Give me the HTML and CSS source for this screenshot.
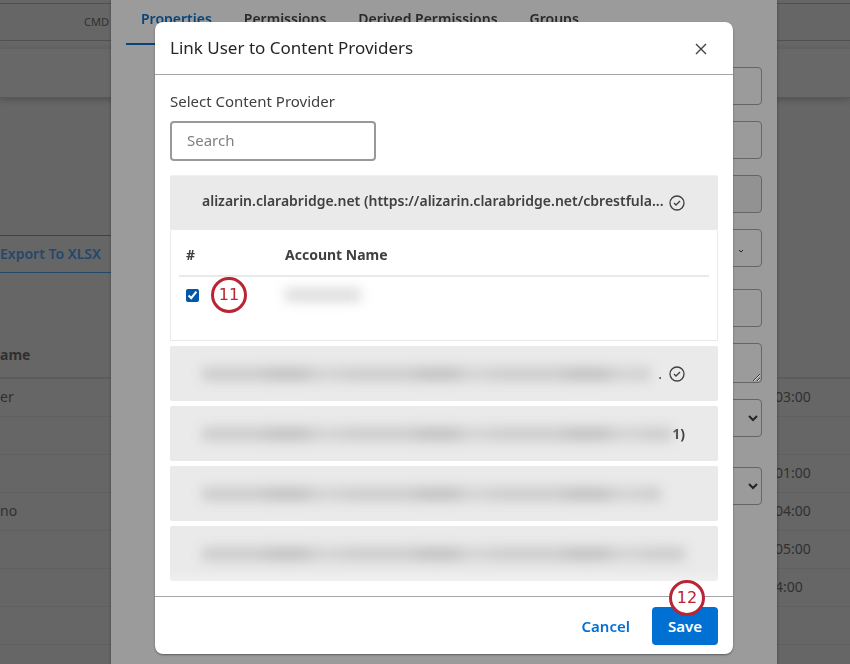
FILE: index.html
```html
<!DOCTYPE html>
<html lang="en">

<head>
    <meta charset="UTF-8">
    <meta name="viewport" content="width=device-width, initial-scale=1.0">
    <title>Link User to Content Providers</title>
    <link rel="stylesheet" href="styles.css">
</head>

<body>
    <!-- Page behind the overlays -->
    <div class="page">
        <div class="top-bar"><span class="top-label">CMD</span></div>
        <div class="sub-bar"></div>
        <div class="toolbar">
            <button class="export-button">Export To XLSX</button>
        </div>
        <table class="users">
            <thead>
                <tr><th>ame</th><th></th></tr>
            </thead>
            <tbody>
                <tr><td>er</td><td class="time">03:00</td></tr>
                <tr><td></td><td></td></tr>
                <tr><td></td><td class="time">01:00</td></tr>
                <tr><td>no</td><td class="time">04:00</td></tr>
                <tr><td></td><td class="time">05:00</td></tr>
                <tr><td></td><td class="time">4:00</td></tr>
                <tr><td></td><td></td></tr>
                <tr><td></td><td></td></tr>
            </tbody>
        </table>
    </div>

    <!-- User details panel -->
    <div class="layer panel-layer">
        <div class="panel">
            <nav class="tabs">
                <a href="#" class="tab active">Properties</a>
                <a href="#" class="tab">Permissions</a>
                <a href="#" class="tab">Derived Permissions</a>
                <a href="#" class="tab">Groups</a>
            </nav>
            <form class="fields">
                <input class="field" type="text" aria-label="First name">
                <input class="field" type="text" aria-label="Last name">
                <input class="field disabled" type="text" aria-label="Email" disabled>
                <button class="field field-menu" type="button" aria-label="Role">
                    <svg width="6" height="4" viewBox="0 0 6 4"><path d="M1 1l2 2 2-2" /></svg>
                </button>
                <input class="field spaced" type="text" aria-label="Phone">
                <textarea class="field area" aria-label="Notes"></textarea>
                <div class="select-wrap">
                    <select class="field" aria-label="Language"></select>
                    <svg width="10" height="7" viewBox="0 0 10 7"><path d="M1 1l4 4 4-4" /></svg>
                </div>
                <div class="select-wrap spaced-lg">
                    <select class="field" aria-label="Status"></select>
                    <svg width="10" height="7" viewBox="0 0 10 7"><path d="M1 1l4 4 4-4" /></svg>
                </div>
            </form>
        </div>
    </div>

    <!-- Dialog -->
    <div class="layer modal-layer">
        <div class="modal" role="dialog" aria-labelledby="modalTitle">
            <div class="modal-header">
                <h1 id="modalTitle">Link User to Content Providers</h1>
                <button class="close-button" aria-label="Close">
                    <svg width="12" height="12" viewBox="0 0 12 12"><path d="M1 1l10 10M11 1L1 11" /></svg>
                </button>
            </div>

            <div class="modal-body">
                <label class="search-label" for="search">Select Content Provider</label>
                <input class="search" id="search" type="text" placeholder="Search">

                <div class="providers">
                    <section class="provider">
                        <div class="provider-header open">
                            <span class="provider-name">alizarin.clarabridge.net (https://alizarin.clarabridge.net/cbrestfula...</span>
                            <svg class="check" width="16" height="16" viewBox="0 0 16 16"><circle cx="8" cy="8" r="7" /><path d="M5 8l2 2 4-4" /></svg>
                        </div>
                        <div class="provider-body">
                            <table class="accounts">
                                <thead>
                                    <tr><th class="col-select">#</th><th>Account Name</th></tr>
                                </thead>
                                <tbody>
                                    <tr>
                                        <td>
                                            <div class="select-cell">
                                                <input type="checkbox" aria-label="Select account" checked>
                                                <span class="step">11</span>
                                            </div>
                                        </td>
                                        <td><div class="masked masked-account"></div></td>
                                    </tr>
                                </tbody>
                            </table>
                        </div>
                    </section>

                    <section class="provider provider-header">
                        <div class="masked"></div>
                        <span class="dot">.</span>
                        <svg class="check" width="16" height="16" viewBox="0 0 16 16"><circle cx="8" cy="8" r="7" /><path d="M5 8l2 2 4-4" /></svg>
                    </section>
                    <section class="provider provider-header">
                        <div class="masked"></div>
                        <span class="name-end">1)</span>
                    </section>
                    <section class="provider provider-header short">
                        <div class="masked"></div>
                    </section>
                    <section class="provider provider-header last">
                        <div class="masked"></div>
                    </section>
                </div>
            </div>

            <div class="modal-footer">
                <button class="cancel-button">Cancel</button>
                <div class="save-wrap">
                    <button class="save-button">Save</button>
                    <span class="step save-step">12</span>
                </div>
            </div>
        </div>
    </div>
</body>

</html>
```
FILE: styles.css
```css
:root {
    --primary: #0070d2;
    --step: #b92534;
    --text: #404040;
    --page: #666666;
    --panel: #9b9b9b;
    --item: #eaeaea;
}

* {
    box-sizing: border-box;
}

body {
    margin: 0;
    height: 100vh;
    overflow: hidden;
    background: var(--page);
    color: var(--text);
    font-family: "Noto Sans", "Open Sans", sans-serif;
    font-size: 14px;
    line-height: 20px;
}

button,
input,
select,
textarea {
    font: inherit;
    color: inherit;
}

/* Page */
.page {
    color: #303030;
}

.top-bar {
    height: 38px;
    margin-top: 3px;
    padding: 8px 84px;
    border-top: 1px solid #505050;
    border-bottom: 1px solid #505050;
    font-size: 11px;
}

.sub-bar {
    height: 50px;
    margin-top: 7px;
    background: #686868;
    border-top: 1px solid #616161;
    border-bottom: 1px solid #575757;
    box-shadow: 0 2px 6px rgba(0, 0, 0, 0.2);
}

.toolbar {
    padding-top: 137px;
}

.export-button {
    display: block;
    height: 38px;
    padding: 0 22px 0 0;
    border: 1px solid #24486b;
    border-left: 0;
    background: none;
    color: #24486b;
    font-weight: 600;
}

.users {
    width: 100%;
    margin-top: 61px;
    border-collapse: collapse;
    table-layout: fixed;
}

.users th,
.users td {
    height: 38px;
    padding: 0 0 1px;
    border-bottom: 1px solid #606060;
    text-align: left;
}

.users th {
    height: 44px;
    border-bottom: 2px solid #5c5c5c;
}

.users th:last-child {
    width: 75px;
}

/* Overlays */
.layer {
    position: fixed;
    inset: 0;
}

.panel-layer {
    padding: 0 73px 0 111px;
}

.modal-layer {
    padding: 22px 117px 0 155px;
}

/* Panel */
.panel {
    height: 100%;
    padding: 0 15px;
    background: var(--panel);
    box-shadow: 0 0 3px rgba(0, 0, 0, 0.3);
}

.tabs {
    display: flex;
    gap: 2px;
}

.tab {
    padding: 9px 15px 14px;
    border-bottom: 2px solid transparent;
    color: #292929;
    font-weight: 600;
    text-decoration: none;
    white-space: nowrap;
}

.tab.active {
    border-color: #0a4478;
    color: #0a4478;
}

.fields {
    display: flex;
    flex-direction: column;
    gap: 16px;
    margin: 22px 0 0 160px;
}

.field {
    display: block;
    width: 100%;
    height: 38px;
    border: 1px solid #666666;
    border-radius: 4px;
    background: transparent;
    appearance: none;
}

.field.disabled {
    background: #929292;
}

.field-menu {
    padding: 0 17px;
    text-align: right;
}

.spaced {
    margin-top: 6px;
}

.spaced-lg {
    margin-top: 14px;
}

.area {
    height: 40px;
}

.select-wrap {
    display: flex;
    align-items: center;
}

.select-wrap svg {
    flex: none;
    margin-left: -14px;
}

.fields svg {
    fill: none;
    stroke: #252525;
    stroke-width: 2;
}

.fields .field-menu svg {
    stroke-width: 1;
}

/* Dialog */
.modal {
    border-radius: 8px;
    background: white;
    box-shadow: 0 1px 2px rgba(0, 0, 0, 0.4);
}

.modal-header {
    display: flex;
    align-items: center;
    justify-content: space-between;
    height: 53px;
    padding: 0 26px 0 15px;
    border-bottom: 1px solid #a6a6a6;
}

h1 {
    margin: 0;
    color: #262626;
    font-size: 17px;
    font-weight: 400;
}

.close-button {
    display: flex;
    padding: 2px 0 0;
    border: 0;
    background: none;
}

.close-button svg {
    fill: none;
    stroke: #404040;
    stroke-width: 1.4;
}

.modal-body {
    padding: 16px 15px 15px;
}

.search-label {
    display: block;
    font-size: 15px;
}

.search {
    display: block;
    width: 206px;
    height: 40px;
    margin-top: 10px;
    padding: 0 15px 2px;
    border: 2px solid #999999;
    border-radius: 4px;
    font-size: 15px;
}

.search::placeholder {
    color: #808080;
    opacity: 1;
}

.providers {
    display: flex;
    flex-direction: column;
    gap: 5px;
    margin-top: 15px;
}

.provider-header {
    display: flex;
    align-items: center;
    height: 55px;
    padding: 0 33px 0 32px;
    border-radius: 2px;
    background: var(--item);
    font-weight: 600;
}

.provider-header.open {
    height: 54px;
    box-shadow: 0 -1px 1px #f0f0f0;
}

.provider-name {
    flex: 1;
    padding-bottom: 4px;
    white-space: nowrap;
}

.name-end {
    font-weight: 700;
}

.check {
    flex: none;
    margin-left: 2px;
    fill: none;
    stroke: #404040;
    stroke-width: 1.3;
}

.provider-body {
    height: 111px;
    padding: 0 8px;
    border: 1px solid var(--item);
    border-top: 0;
}

.accounts {
    width: 100%;
    border-collapse: collapse;
}

.accounts th {
    height: 46px;
    padding: 5px 0 0;
    border-bottom: 2px solid var(--item);
    font-weight: 700;
    text-align: left;
}

.accounts th.col-select {
    width: 106px;
    padding-left: 7px;
}

.accounts td {
    padding: 0;
}

.select-cell {
    display: flex;
    align-items: center;
    gap: 12px;
    padding-left: 7px;
}

.select-cell input {
    width: 13px;
    height: 13px;
    margin: 0;
    accent-color: #0059a8;
}

/* Redacted names */
.masked {
    flex: 1;
    height: 14px;
    background: repeating-linear-gradient(90deg, #cccccc 0 54px, #c2c2c2 72px 100px, #d2d2d2 116px 132px, #cccccc 150px);
    filter: blur(6px);
}

.masked-account {
    width: 76px;
    background: #dddddd;
}

.short .masked {
    margin-right: 24px;
}

.dot {
    margin: 0 5px 0 8px;
    font-weight: 400;
}

.last {
    background: linear-gradient(var(--item) 80%, #f0f0f0);
}

/* Numbered callouts */
.step {
    display: flex;
    align-items: center;
    justify-content: center;
    width: 36px;
    height: 36px;
    border: 3px solid var(--step);
    border-radius: 50%;
    background: white;
    color: var(--step);
    font-family: "DejaVu Sans", sans-serif;
    font-size: 16px;
}

.modal-footer {
    display: flex;
    align-items: center;
    justify-content: flex-end;
    gap: 22px;
    height: 58px;
    padding: 0 15px;
    border-top: 1px solid #a6a6a6;
}

.modal-footer button {
    height: 38px;
    border: 0;
    border-radius: 4px;
    font-size: 15px;
    font-weight: 600;
}

.cancel-button {
    padding: 0;
    background: none;
    color: var(--primary);
}

.save-wrap {
    position: relative;
}

.save-button {
    padding: 0 16px;
    background: var(--primary);
    color: white;
}

.save-step {
    position: absolute;
    top: -27px;
    right: 13px;
}
```
